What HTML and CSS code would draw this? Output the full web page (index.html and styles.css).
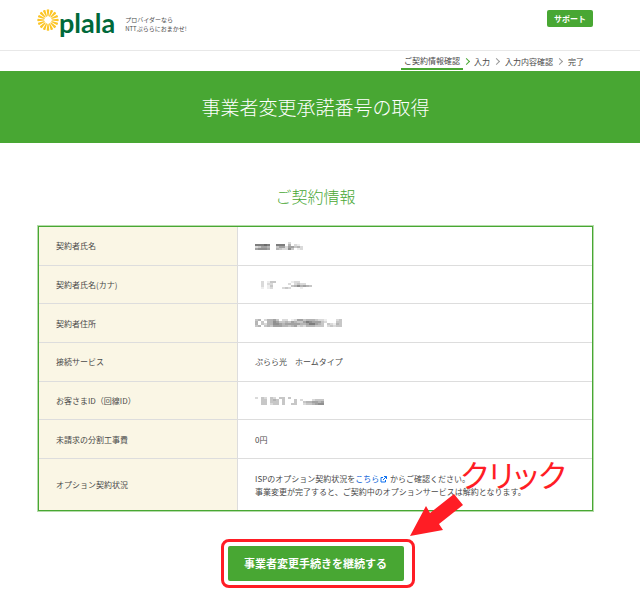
FILE: index.html
```html
<!DOCTYPE html>
<html lang="ja">

<head>
  <meta charset="UTF-8">
  <meta name="viewport" content="width=device-width, initial-scale=1.0">
  <title>事業者変更承諾番号の取得</title>
  <link rel="stylesheet" href="styles.css">
</head>

<body>
  <header class="header">
    <a class="logo" href="#">
      <svg class="logo-mark" viewBox="0 0 42 42" aria-hidden="true">
        <g fill="#fcc526">
          <path id="ray" d="M18.500 1.500Q21 -.5 23.500 1.500L22 14H20Z" />
          <use href="#ray" transform="rotate(22.500 21 21)" />
          <use href="#ray" transform="rotate(45 21 21)" />
          <use href="#ray" transform="rotate(67.500 21 21)" />
          <use href="#ray" transform="rotate(90 21 21)" />
          <use href="#ray" transform="rotate(112.500 21 21)" />
          <use href="#ray" transform="rotate(135 21 21)" />
          <use href="#ray" transform="rotate(157.500 21 21)" />
          <use href="#ray" transform="rotate(180 21 21)" />
          <use href="#ray" transform="rotate(202.500 21 21)" />
          <use href="#ray" transform="rotate(225 21 21)" />
          <use href="#ray" transform="rotate(247.500 21 21)" />
          <use href="#ray" transform="rotate(270 21 21)" />
          <use href="#ray" transform="rotate(292.500 21 21)" />
          <use href="#ray" transform="rotate(315 21 21)" />
          <use href="#ray" transform="rotate(337.500 21 21)" />
        </g>
      </svg>
      <span class="logo-name">plala</span>
    </a>
    <p class="tagline">プロバイダーなら<br>NTTぷららにおまかせ!</p>
    <a class="support" href="#">サポート</a>
  </header>

  <ol class="steps">
    <li class="step current">ご契約情報確認</li>
    <li class="step">入力</li>
    <li class="step">入力内容確認</li>
    <li class="step">完了</li>
  </ol>

  <h1 class="page-title">事業者変更承諾番号の取得</h1>

  <main class="main">
    <h2 class="section-title">ご契約情報</h2>

    <div class="info-frame">
      <table class="info">
        <tr>
          <th scope="row">契約者氏名</th>
          <td><svg class="mosaic" id="name" viewBox="0 0 96 10"></svg></td>
        </tr>
        <tr>
          <th scope="row">契約者氏名(カナ)</th>
          <td><svg class="mosaic" id="kana" viewBox="0 0 96 10"></svg></td>
        </tr>
        <tr>
          <th scope="row">契約者住所</th>
          <td><svg class="mosaic" id="address" viewBox="0 0 96 10"></svg></td>
        </tr>
        <tr>
          <th scope="row">接続サービス</th>
          <td>ぷらら光　ホームタイプ</td>
        </tr>
        <tr>
          <th scope="row">お客さまID（回線ID）</th>
          <td><svg class="mosaic" id="customer" viewBox="0 0 96 10"></svg></td>
        </tr>
        <tr>
          <th scope="row">未請求の分割工事費</th>
          <td>0円</td>
        </tr>
        <tr>
          <th scope="row">オプション契約状況</th>
          <td>
            ISPのオプション契約状況を<a href="#">こちら<svg class="external" viewBox="0 0 14 14" aria-hidden="true"><path d="M6 3H2V12H11V8M8 1H13V6M13 1L6 8" /></svg></a> からご確認ください。<br>
            事業変更が完了すると、ご契約中のオプションサービスは解約となります。
          </td>
        </tr>
      </table>
    </div>

    <div class="action">
      <div class="highlight">
        <button class="continue" type="button">事業者変更手続きを継続する</button>
        <div class="note">
          <span class="note-text">クリック</span>
          <svg class="note-arrow" viewBox="0 0 54 44" aria-hidden="true"><path fill="#ff1d25" d="M0 43L16 13L20 20L44 1L53 12L29 31L33 37Z" /></svg>
        </div>
      </div>
    </div>
  </main>

  <script src="mosaic.js"></script>
</body>

</html>
```
FILE: mosaic.js
```js
// 個人情報のモザイク: 0 = 透明, 9 = 濃い
const mosaics = {
  name: ['0000000000020000', '7778700777040210', '2355400355255342', '5666500432263012'],
  kana: ['0020133000001220000', '0020220000020232200', '0020130000003464543', '0010120002320001000'],
  address: ['34024453022012553444322100023', '40304465334354335765553200033', '40324466545555544577543032143', '34034355544345232444333023233'],
  customer: ['20320320330300000000000', '00330343030003020002333', '00330333030003003445545', '00330233030033002334566']
};

Object.entries(mosaics).forEach(([id, rows]) => {
  let cells = '';
  rows.forEach((row, y) => {
    [...row].forEach((v, x) => {
      if (v > 0) cells += `<rect x="${x * 3}" y="${y * 2 + 1}" width="3" height="2" fill="#333" opacity="${v / 11}"/>`;
    });
  });
  document.getElementById(id).innerHTML = cells;
});
```
FILE: styles.css
```css
* {
  box-sizing: border-box;
  margin: 0;
  padding: 0;
}

body {
  background: #fff;
  color: #4a4a4a;
  font-family: "Noto Sans CJK JP", sans-serif;
  font-size: 8px;
  line-height: 13px;
}

.header {
  display: flex;
  align-items: flex-start;
  height: 51px;
  padding: 9px 47px 0 37px;
  border-bottom: 1px solid #e8e8e8;
}

.logo {
  display: flex;
  color: #00693a;
  text-decoration: none;
}

.logo-mark {
  width: 22px;
  height: 22px;
}

.logo-name {
  font: bold 27px/28px Lato, sans-serif;
}

.tagline {
  margin: 6px 0 0 10px;
  font-size: 6px;
  line-height: 9px;
}

.support {
  width: 46px;
  margin: 1px 0 0 auto;
  border-radius: 2px;
  background: #48a733;
  color: #fff;
  font-weight: bold;
  line-height: 17px;
  text-align: center;
  text-decoration: none;
}

.steps {
  display: flex;
  justify-content: flex-end;
  height: 20px;
  padding-right: 53px;
  list-style: none;
}

.step {
  display: flex;
  align-items: center;
  height: 19px;
  padding: 2px 3px 0;
}

.step.current {
  border-bottom: 2px solid #48a733;
}

.step + .step {
  padding: 2px 3px 0 0;
}

.step + .step::before {
  content: "";
  width: 4px;
  height: 4px;
  margin: 0 6px 0 1px;
  border: solid #999;
  border-width: 1px 1px 0 0;
  transform: rotate(45deg);
}

.step.current + .step::before {
  margin: 0 5px 0 1px;
  border-color: #48a733;
}

.page-title {
  padding: 22px 9px 22px 0;
  background: #48a733;
  color: #fff;
  font-size: 19px;
  font-weight: 300;
  line-height: 28px;
  text-align: center;
}

.main {
  padding: 40px 47px 3px 38px;
}

.section-title {
  margin-bottom: 17px;
  color: #48a733;
  font-size: 16px;
  font-weight: 300;
  line-height: 26px;
  text-align: center;
}

.info-frame {
  border: 1px solid #48a733;
  box-shadow: 0 0 0 1px #b5dcaa;
}

.info {
  width: 100%;
  height: 283px;
  border-spacing: 0;
}

.info th,
.info td {
  padding: 12px 17px;
  border-bottom: 1px solid #ddd;
  text-align: left;
}

.info tr:last-child > * {
  border-bottom: 0;
}

.info th {
  width: 36%;
  border-right: 1px solid #ddd;
  background: #faf6e5;
  font-weight: normal;
}

.info a {
  color: #0b5ed7;
  text-decoration: none;
}

.mosaic {
  display: block;
  width: 96px;
  height: 10px;
}

.external {
  width: 7px;
  height: 7px;
  margin: 0 1px;
  fill: none;
  stroke: #0b6ff0;
  stroke-width: 2;
  vertical-align: -1px;
}

.action {
  display: flex;
  justify-content: center;
  margin-top: 28px;
  padding-left: 4px;
}

.highlight {
  position: relative;
  padding: 4px 8px 4px 4px;
  border: 3px solid #ff1d25;
  border-radius: 8px;
}

.continue {
  display: block;
  width: 176px;
  border: 0;
  border-radius: 2px;
  background: #48a733;
  color: #fff;
  font-family: inherit;
  font-size: 11px;
  font-weight: bold;
  line-height: 35px;
}

/* ボタンの右上に重ねる案内 */
.note {
  position: absolute;
  left: 186px;
  bottom: 48px;
  color: #ff1d25;
}

.note-text {
  display: block;
  margin-left: 51px;
  font-size: 31px;
  font-feature-settings: "palt";
  line-height: 38px;
  white-space: nowrap;
}

.note-arrow {
  display: block;
  width: 54px;
  height: 44px;
}
```
